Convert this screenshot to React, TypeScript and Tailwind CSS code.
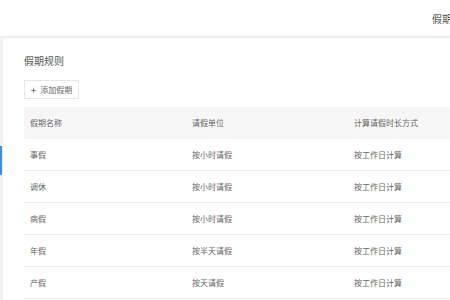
const rows = [
  { name: "事假", unit: "按小时请假", calc: "按工作日计算" },
  { name: "调休", unit: "按小时请假", calc: "按工作日计算" },
  { name: "病假", unit: "按小时请假", calc: "按工作日计算" },
  { name: "年假", unit: "按半天请假", calc: "按工作日计算" },
  { name: "产假", unit: "按天请假", calc: "按工作日计算" },
];

export default function App() {
  return (
    <div
      className="w-[450px] h-[300px] overflow-hidden bg-[#f3f4f6] text-[#666]"
      style={{ fontFamily: '"Noto Sans CJK SC", "Noto Sans", sans-serif' }}
    >
      {/* top bar */}
      <div className="h-[37px] bg-white border-b border-[#ebebeb] flex items-center pl-[432px] whitespace-nowrap overflow-hidden">
        <span className="text-[10px] text-[#555]">假期管理</span>
      </div>

      <div className="flex mt-[2px] h-[261px]">
        {/* left nav edge */}
        <div className="w-[2px] shrink-0 pt-[107px]">
          <div className="h-[29px] bg-[#3a8ee6]" />
        </div>

        {/* card */}
        <div className="flex-1 bg-white border-l border-[#eeeeee] pl-[21px] pt-[15px] overflow-hidden">
          <div className="text-[10px] text-[#555] leading-[14px]">假期规则</div>

          <button className="mt-[12px] h-[19px] w-[55px] flex items-center justify-center gap-[4px] border border-[#e6e6e6] bg-white text-[8px] text-[#666]">
            <span className="text-[10px] leading-none">+</span>
            <span>添加假期</span>
          </button>

          <div className="mt-[8px] w-[486px] text-[8px]">
            <div className="h-[32px] bg-[#f6f6f6] grid grid-cols-3 items-center">
              <div className="pl-[6px]">假期名称</div>
              <div className="pl-[6px]">请假单位</div>
              <div className="pl-[6px]">计算请假时长方式</div>
            </div>
            {rows.map((r) => (
              <div
                key={r.name}
                className="h-[32px] grid grid-cols-3 items-center border-b border-[#ececec]"
              >
                <div className="pl-[6px]">{r.name}</div>
                <div className="pl-[6px]">{r.unit}</div>
                <div className="pl-[6px]">{r.calc}</div>
              </div>
            ))}
          </div>
        </div>
      </div>
    </div>
  );
}
